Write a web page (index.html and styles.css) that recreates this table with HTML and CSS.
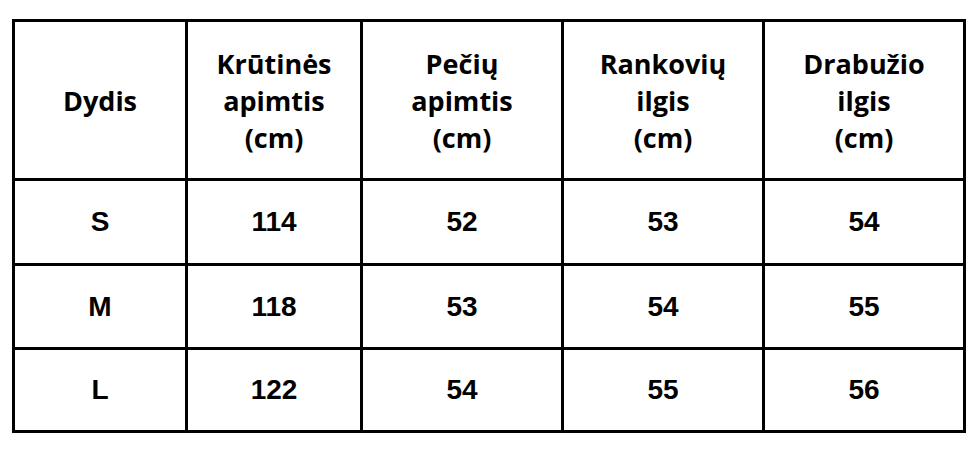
FILE: index.html
```html
<!DOCTYPE html>
<html lang="lt">
<head>
<meta charset="utf-8">
<link rel="stylesheet" href="styles.css">
</head>
<body>
<div class="table">
  <div class="cell head">Dydis</div>
  <div class="cell head">Krūtinės<br>apimtis<br>(cm)</div>
  <div class="cell head">Pečių<br>apimtis<br>(cm)</div>
  <div class="cell head">Rankovių<br>ilgis<br>(cm)</div>
  <div class="cell head">Drabužio<br>ilgis<br>(cm)</div>

  <div class="cell num">S</div>
  <div class="cell num">114</div>
  <div class="cell num">52</div>
  <div class="cell num">53</div>
  <div class="cell num">54</div>

  <div class="cell num">M</div>
  <div class="cell num">118</div>
  <div class="cell num">53</div>
  <div class="cell num">54</div>
  <div class="cell num">55</div>

  <div class="cell num">L</div>
  <div class="cell num">122</div>
  <div class="cell num">54</div>
  <div class="cell num">55</div>
  <div class="cell num">56</div>
</div>
</body>
</html>
```
FILE: styles.css
```css
html, body {
  margin: 0;
  padding: 0;
  background: #ffffff;
}
body {
  padding: 19px 0 0 12px;
}
.table {
  display: inline-grid;
  grid-template-columns: 170px 172px 198px 198px 198px;
  grid-template-rows: 156px 82px 81px 80px;
  gap: 3px;
  padding: 3px;
  background: #000000;
}
.cell {
  background: #ffffff;
  display: flex;
  align-items: center;
  justify-content: center;
  text-align: center;
  color: #000000;
}
.head {
  font-family: "Open Sans", sans-serif;
  font-weight: 700;
  font-size: 27px;
  line-height: 37px;
}
.num {
  font-family: "Liberation Sans", Arial, sans-serif;
  font-weight: 700;
  font-size: 28px;
}
```
